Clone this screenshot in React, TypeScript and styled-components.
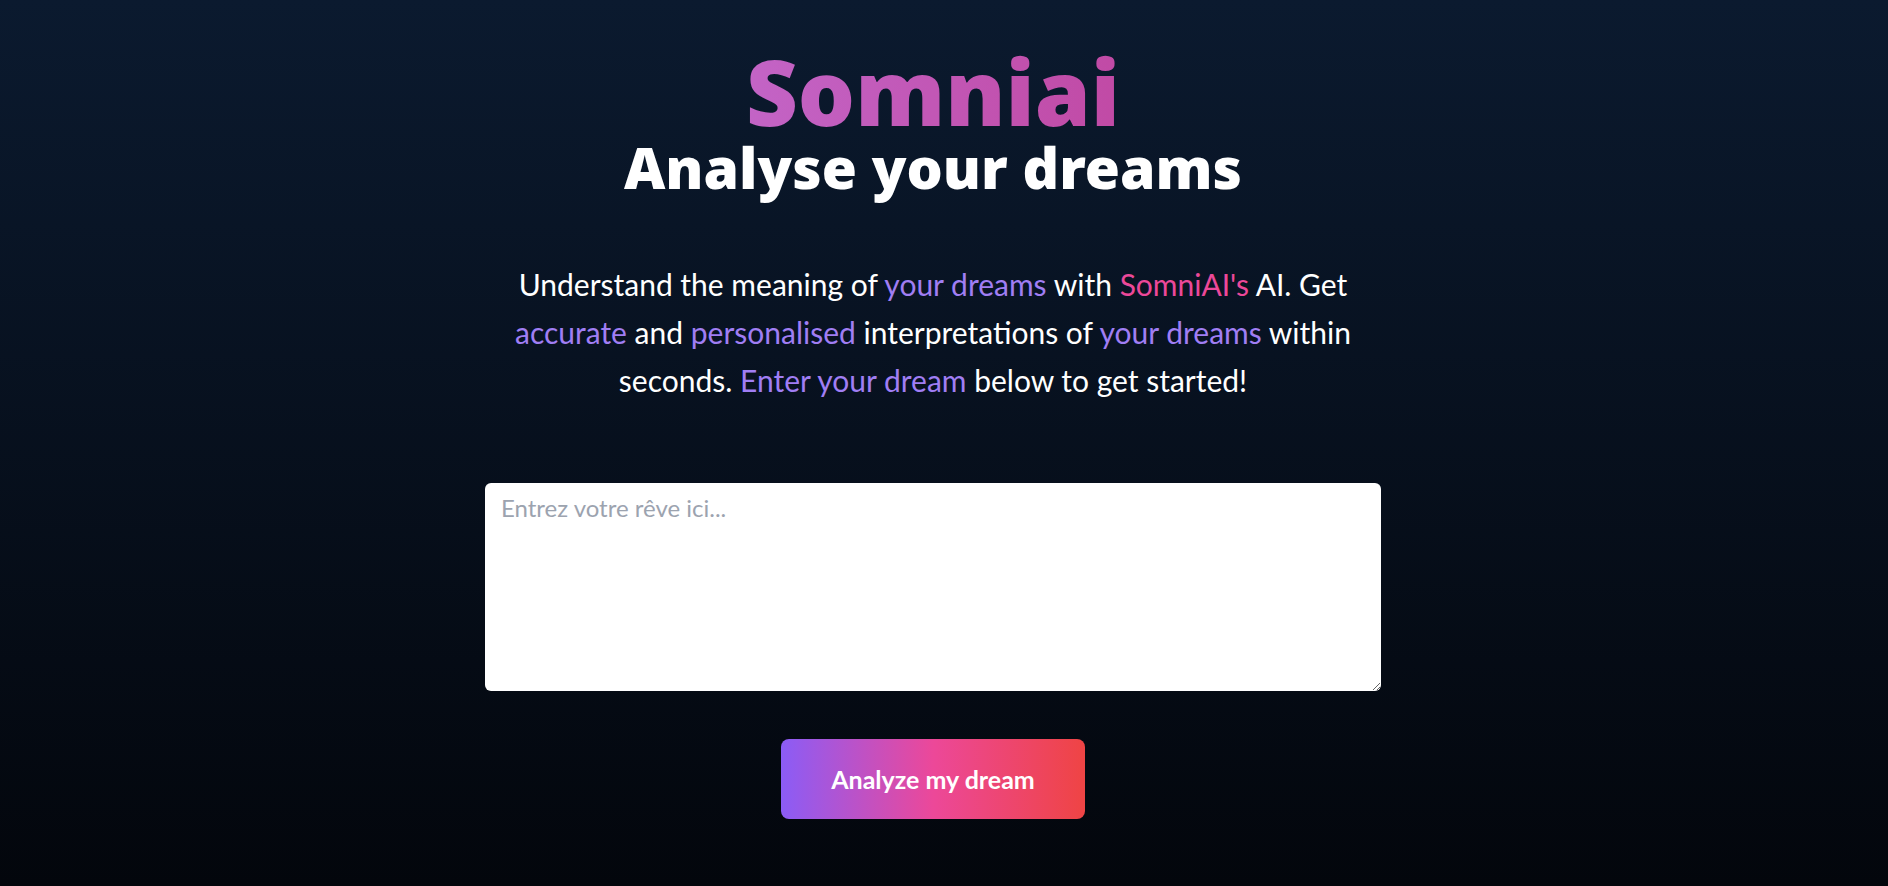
import React from 'react';
import styled, { createGlobalStyle } from 'styled-components';

const GlobalStyle = createGlobalStyle`
  html, body {
    margin: 0;
    padding: 0;
  }
  body {
    font-family: Lato, "Noto Sans", sans-serif;
    background: #03060c;
  }
`;

const Page = styled.main`
  min-height: 886px;
  box-sizing: border-box;
  padding: 43px 46px 40px 24px;
  display: flex;
  flex-direction: column;
  align-items: center;
  background: linear-gradient(180deg, #0b1a2f 0%, #03060c 100%);
`;

const Title = styled.h1`
  margin: 0;
  font-family: "Noto Sans", Lato, sans-serif;
  font-size: 90px;
  line-height: 96px;
  font-weight: 900;
  background: linear-gradient(90deg, #c364c6 0%, #c14aa5 100%);
  -webkit-background-clip: text;
  background-clip: text;
  color: transparent;
`;

const Subtitle = styled.h2`
  margin: 0;
  font-family: "Noto Sans", Lato, sans-serif;
  font-size: 57px;
  line-height: 56px;
  font-weight: 900;
  color: #ffffff;
`;

const Intro = styled.p`
  margin: 65px 0 0;
  max-width: 896px;
  font-size: 30px;
  line-height: 48px;
  color: #ffffff;
  text-align: center;
`;

const Accent = styled.span<{ $tone: 'violet' | 'pink' }>`
  color: ${(p) => (p.$tone === 'pink' ? '#ec4899' : '#a07ef4')};
`;

const DreamInput = styled.textarea`
  margin-top: 79px;
  width: 896px;
  height: 208px;
  box-sizing: border-box;
  padding: 9px 16px;
  border: none;
  border-radius: 6px;
  background: #ffffff;
  font-family: Lato, "Noto Sans", sans-serif;
  font-size: 24px;
  line-height: 32px;
  color: #111827;
  outline: none;

  &::placeholder {
    color: #9ca3af;
  }
`;

const AnalyzeButton = styled.button`
  margin-top: 48px;
  padding: 24px 50px;
  border: none;
  border-radius: 8px;
  background: linear-gradient(90deg, #8b5cf6 0%, #ec4899 50%, #ef4444 100%);
  color: #ffffff;
  font-family: Lato, "Noto Sans", sans-serif;
  font-size: 25px;
  line-height: 32px;
  font-weight: 700;
  cursor: pointer;
`;

export default function App() {
  return (
    <>
      <GlobalStyle />
      <Page>
        <Title>Somniai</Title>
        <Subtitle>Analyse your dreams</Subtitle>
        <Intro>
          Understand the meaning of <Accent $tone="violet">your dreams</Accent> with{' '}
          <Accent $tone="pink">SomniAI's</Accent> AI. Get <Accent $tone="violet">accurate</Accent> and{' '}
          <Accent $tone="violet">personalised</Accent> interpretations of{' '}
          <Accent $tone="violet">your dreams</Accent> within seconds.{' '}
          <Accent $tone="violet">Enter your dream</Accent> below to get started!
        </Intro>
        <DreamInput placeholder="Entrez votre rêve ici..." />
        <AnalyzeButton>Analyze my dream</AnalyzeButton>
      </Page>
    </>
  );
}
